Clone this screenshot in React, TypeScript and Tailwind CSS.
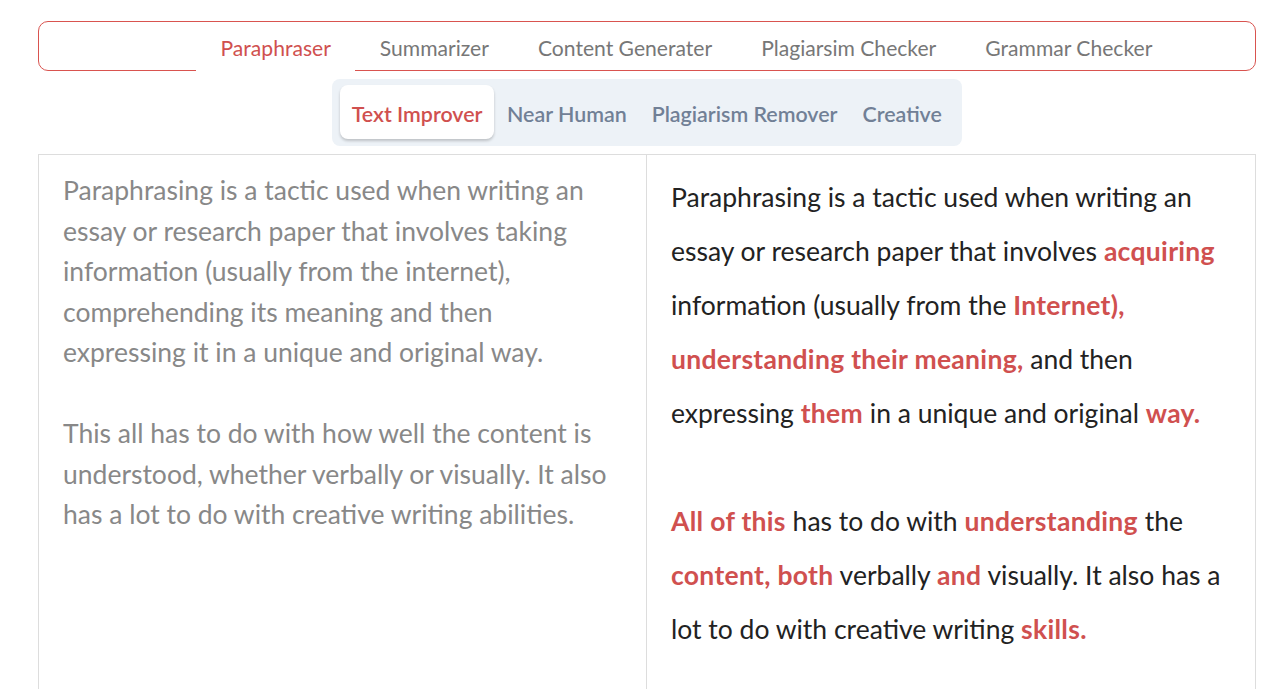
import React from "react";

const R = ({ children }: { children: React.ReactNode }) => (
  <span className="font-bold tracking-[0.3px] text-[#d0504f]">{children}</span>
);

export default function App() {
  const tabs = ["Paraphraser", "Summarizer", "Content Generater", "Plagiarsim Checker", "Grammar Checker"];
  const modes = ["Text Improver", "Near Human", "Plagiarism Remover", "Creative"];
  return (
    <div className="min-h-[689px] bg-white pl-[38px] pr-[32px] pt-[21px] font-['Lato',sans-serif]">
      <div className="flex h-[50px] rounded-[10px] border border-[#d9534f] pl-[157px]">
        {tabs.map((t, i) => (
          <div
            key={t}
            className={
              i === 0
                ? "relative -mb-px flex items-center border-b border-white bg-white px-[24.5px] pt-[4px] text-[21.1px] text-[#d0504f]"
                : "flex items-center px-[24.5px] pt-[4px] text-[21.1px] text-[#777]"
            }
          >
            {t}
          </div>
        ))}
      </div>
      <div className="mt-[8px] flex justify-center">
        <div className="flex rounded-[8px] bg-[#edf2f7] px-[8px] pb-[7px] pt-[6px]">
          {modes.map((m, i) => (
            <div
              key={m}
              className={
                i === 0
                  ? "flex h-[54px] items-center rounded-[8px] bg-white px-[12px] pt-[5px] text-[21.4px] font-semibold text-[#d0504f] shadow-[0_2px_3px_rgba(0,0,0,0.2)]"
                  : "flex h-[54px] items-center px-[12.5px] pt-[5px] text-[21.4px] font-semibold text-[#718096]"
              }
            >
              {m}
            </div>
          ))}
        </div>
      </div>
      <div className="mt-[8px] grid h-[540px] grid-cols-2 border border-[#ddd]">
        <div className="border-r border-[#ddd] px-[24px] pt-[15px] text-[26.5px] leading-[40.5px] text-[#888]">
          <p>
            Paraphrasing is a tactic used when writing an essay or research paper that involves taking information
            (usually from the internet), comprehending its meaning and then expressing it in a unique and original way.
          </p>
          <p className="mt-[40.5px]">
            This all has to do with how well the content is understood, whether verbally or visually. It also has a lot
            to do with creative writing abilities.
          </p>
        </div>
        <div className="px-[24px] pt-[15px] text-[26.5px] leading-[54px] text-[#222]">
          <p>
            Paraphrasing is a tactic used when writing an essay or research paper that involves <R>acquiring</R>{" "}
            information (usually from the <R>Internet),</R> <R>understanding their meaning,</R> and then expressing{" "}
            <R>them</R> in a unique and original <R>way.</R>
          </p>
          <p className="mt-[54px]">
            <R>All of this</R> has to do with <R>understanding</R> the <R>content,</R> <R>both</R> verbally{" "}
            <R>and</R> visually. It also has a lot to do with creative writing <R>skills.</R>
          </p>
        </div>
      </div>
    </div>
  );
}
